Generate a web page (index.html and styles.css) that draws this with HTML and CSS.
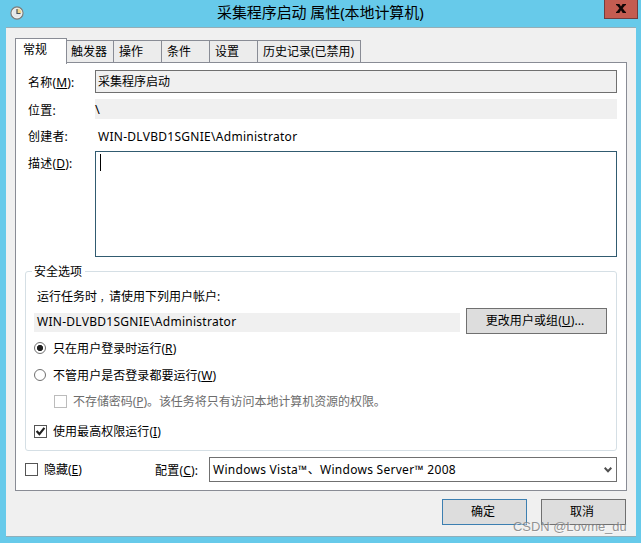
FILE: index.html
```html
<!DOCTYPE html>
<html lang="zh-CN">
<head>
<meta charset="utf-8">
<title>采集程序启动 属性(本地计算机)</title>
<link rel="stylesheet" href="styles.css">
</head>
<body>
<div class="window">
  <header class="titlebar">
    <svg class="clock" width="14" height="14" viewBox="0 0 14 14"><circle cx="7" cy="7" r="6" fill="#e4e8e9" stroke="#7e7f7c" stroke-width="1.3"/><path d="M7 7V2.2A4.8 4.8 0 0 1 11.8 7Z" fill="#f0d58b"/><circle cx="7" cy="7" r="4.9" fill="none" stroke="#f7f7f4" stroke-width=".7"/><path d="M7 3V7.5H10.5" fill="none" stroke="#48535d" stroke-width="1.2"/></svg>
    <h1 class="title">采集程序启动 属性(本地计算机)</h1>
    <button class="close"><svg width="10" height="9" viewBox="0 0 10 9"><path d="M0 0H3.4L5 2.5 6.6 0H10V1.2H9.2L6.7 4.3 9.3 7.7H10V9H6.7L5 6.3 3.3 9H0V7.7H.7L3.4 4.3.8 1.2H0Z" fill="#120606"/></svg></button>
  </header>
  <main class="client">
    <nav class="tabs">
      <span class="tab active">常规</span><span class="tab trigger">触发器</span><span class="tab">操作</span><span class="tab">条件</span><span class="tab">设置</span><span class="tab history">历史记录(已禁用)</span>
    </nav>
    <section class="panel">
      <div class="row name"><label>名称(<u>M</u>):</label><div class="field boxed">采集程序启动</div></div>
      <div class="row location"><label>位置:</label><div class="field path">\</div></div>
      <div class="row creator"><label>创建者:</label><div class="latin">WIN-DLVBD1SGNIE\Administrator</div></div>
      <div class="row description"><label>描述(<u>D</u>):</label><div class="textarea"><i class="caret"></i></div></div>
      <fieldset class="security">
        <legend>安全选项</legend>
        <p class="prompt">运行任务时<span class="comma">，</span>请使用下列用户帐户:</p>
        <div class="account"><div class="user latin">WIN-DLVBD1SGNIE\Administrator</div><button class="button change"><span>更改用户或组(<u>U</u>)...</span></button></div>
        <div class="option first"><i class="radio checked"></i><span>只在用户登录时运行(<u>R</u>)</span></div>
        <div class="option second"><i class="radio"></i><span>不管用户是否登录都要运行(<u>W</u>)</span></div>
        <div class="option disabled"><i class="check"></i><span>不存储密码(<u>P</u>)。该任务将只有访问本地计算机资源的权限。</span></div>
        <div class="option highest"><i class="check"><svg width="11" height="11" viewBox="0 0 11 11"><path d="M1.6 5.1L4.4 8.1 9.4 1.9" fill="none" stroke="#202020" stroke-width="2.2"/></svg></i><span>使用最高权限运行(<u>I</u>)</span></div>
      </fieldset>
      <div class="config">
        <i class="check"></i><span class="hidden-label">隐藏(<u>E</u>)</span><span class="config-label">配置(<u>C</u>):</span>
        <div class="select"><span class="choice">Windows Vista™、Windows Server™ 2008</span><svg width="8" height="6" viewBox="0 0 8 6"><path d="M.7 .8L4 4.3 7.3 .8" fill="none" stroke="#505050" stroke-width="2"/></svg></div>
      </div>
    </section>
    <footer class="actions"><button class="button ok">确定</button><button class="button cancel">取消</button></footer>
  </main>
  <div class="watermark">CSDN @Lovme_du</div>
</div>
</body>
</html>
```
FILE: styles.css
```css
* { box-sizing: border-box; }
body { margin: 0; overflow: hidden; font: 12px/18px "Noto Sans", "Noto Sans CJK SC", sans-serif; color: #000; }
button { font: inherit; color: inherit; padding: 0; }
u { text-decoration: underline; text-underline-offset: 1px; text-decoration-thickness: 1px; text-decoration-skip-ink: none; }
i { display: block; flex: none; }
.window { position: relative; width: 641px; height: 543px; padding: 0 5px 6px 6px; background: #67caea; }
.titlebar { display: flex; height: 27px; }
.clock { flex: none; margin: 6px 0 0 4px; }
.title { width: 210px; margin: 0 0 0 193px; font-size: 15px; font-weight: 400; line-height: 24px; white-space: nowrap; letter-spacing: -.08px; }
.close { display: flex; justify-content: center; width: 34px; height: 19px; margin-left: auto; margin-right: -2px; padding-top: 4px; background: #c45c51; border: 1px solid #733c3e; border-top: 0; }
.client { height: 510px; padding: 10px 9px 0; background: #f0f0f0; border-top: 1px solid #94aeb7; border-bottom: 1px solid #8eafbb; }
.tabs { display: flex; align-items: flex-end; height: 25px; margin-bottom: -1px; }
.tab { width: 48px; height: 23px; padding: 2px 0 0 5px; white-space: nowrap; background: #ececec; border: 1px solid #898c95; border-left-width: 0; }
.tab.active { position: relative; width: 52px; height: 26px; margin-bottom: -1px; padding: 2px 0 0 7px; background: #fff; border-left-width: 1px; border-bottom: 0; }
.tab.trigger { width: 47px; padding-left: 4px; }
.tab.history { width: 103px; }
.panel { width: 612px; height: 429px; padding: 7px 9px 0; background: #fff; border: 1px solid #898c95; }
.row { display: grid; grid-template-columns: 67px 522px; padding-left: 3px; }
.row label { letter-spacing: .2px; }
.name { height: 29px; }
.name label { padding-top: 4px; }
.field { height: 20px; background: #f0f0f0; }
.field.boxed { height: 23px; padding: 2px 2px 0; border: 1px solid #707070; }
.field.path { padding-top: 1px; font-size: 13px; }
.location { height: 27px; }
.location label { padding-top: 3px; }
.creator { height: 25px; padding-top: 2px; }
.creator .latin { padding-left: 3px; }
.latin { letter-spacing: .28px; white-space: nowrap; }
.description { height: 112px; }
.description label { padding-top: 4px; }
.textarea { height: 106px; padding: 2px 4px; border: 1px solid #315b70; }
.caret { width: 1px; height: 17px; background: #000; }
.security { width: 592px; height: 188px; margin: 0; padding: 0 9px 0 8px; border: 1px solid #d5dfe5; border-radius: 3px; }
.security legend { height: 17px; margin-left: -2px; padding: 0 3px 0 2px; line-height: 17px; }
.prompt { margin: 8px 0 7px 3px; }
.comma { display: inline-block; width: 12px; padding-left: 3px; font-size: 9px; line-height: 12px; }
.account { display: flex; justify-content: space-between; height: 26px; }
.user { width: 426px; height: 19px; padding-left: 3px; line-height: 17px; background: #f0f0f0; }
.button { display: flex; justify-content: center; align-items: center; flex: none; width: 85px; height: 26px; background: #ddd; border: 1px solid #707070; padding-bottom: 1px; white-space: nowrap; }
.change { width: 141px; margin-top: -5px; padding-right: 3px; letter-spacing: .08px; }
.option { display: flex; align-items: center; height: 18px; gap: 6px; white-space: nowrap; }
.option span { padding-top: 2px; letter-spacing: .05px; }
.radio { width: 12px; height: 12px; border: 1px solid #707070; border-radius: 50%; margin-right: 1px; }
.radio.checked { background: radial-gradient(circle, #202020 0 2.8px, #fff 3.3px); }
.check { width: 13px; height: 13px; border: 1px solid #555; background: #fff; }
.check svg { display: block; }
.second { margin-top: 9px; }
.disabled { margin: 8px 0 12px 20px; color: #6d6d6d; }
.disabled span { letter-spacing: -.06px; }
.disabled .check { border-color: #bcbcbc; }
.config { display: flex; align-items: center; height: 25px; margin-top: 6px; }
.hidden-label { width: 111px; padding-left: 6px; }
.config-label { width: 60px; padding: 2px 0 0 6px; letter-spacing: .2px; }
.select { display: flex; align-items: center; justify-content: space-between; width: 408px; height: 25px; padding: 0 4px 0 3px; border: 1px solid #707070; }
.choice { white-space: nowrap; letter-spacing: .28px; }
.actions { display: flex; justify-content: flex-end; gap: 14px; padding: 8px 1px 0 0; }
.ok, .cancel { padding-right: 3px; }
.ok { border-color: #3c7fb1; }
.watermark { position: absolute; left: 513px; top: 518px; font: 13px/18px "Liberation Sans", sans-serif; letter-spacing: -.05px; color: #858585e0; text-shadow: 1px 1px #fff8; white-space: nowrap; }
```
